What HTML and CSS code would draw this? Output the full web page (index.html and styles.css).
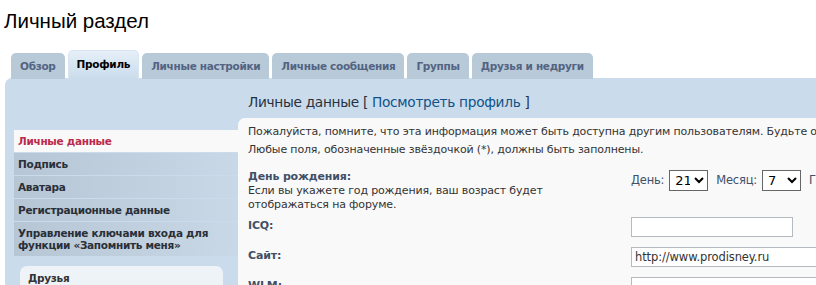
FILE: index.html
```html
<!DOCTYPE html>
<html lang="ru">
<head>
  <meta charset="UTF-8">
  <title>Личный раздел</title>
  <link rel="stylesheet" href="styles.css">
</head>
<body>
  <div class="page">
    <h1 class="page-title">Личный раздел</h1>

    <!-- Tabs -->
    <ul class="tabs">
      <li class="tab"><a href="#">Обзор</a></li>
      <li class="tab active"><a href="#">Профиль</a></li>
      <li class="tab"><a href="#">Личные настройки</a></li>
      <li class="tab"><a href="#">Личные сообщения</a></li>
      <li class="tab"><a href="#">Группы</a></li>
      <li class="tab"><a href="#">Друзья и недруги</a></li>
    </ul>

    <div class="panel">
      <div class="cp-menu">
        <ul class="nav">
          <li class="nav-item active"><a href="#">Личные данные</a></li>
          <li class="nav-item"><a href="#">Подпись</a></li>
          <li class="nav-item"><a href="#">Аватара</a></li>
          <li class="nav-item"><a href="#">Регистрационные данные</a></li>
          <li class="nav-item"><a href="#">Управление ключами входа для функции «Запомнить меня»</a></li>
        </ul>
        <div class="friends">
          <h3>Друзья</h3>
        </div>
      </div>

      <div class="cp-main">
        <h2 class="main-title">Личные данные [ <a href="#">Посмотреть профиль</a> ]</h2>
        <div class="content">
          <p class="note">Пожалуйста, помните, что эта информация может быть доступна другим пользователям. Будьте осторожны при вводе любых личных данных.<br>Любые поля, обозначенные звёздочкой (*), должны быть заполнены.</p>

          <dl class="row row-birthday">
            <dt>
              <label>День рождения:</label>
              <span class="explain">Если вы укажете год рождения, ваш возраст будет<br>отображаться на форуме.</span>
            </dt>
            <dd>
              <span class="sel-label">День:</span>
              <select class="sel"><option>21</option></select>
              <span class="sel-label">Месяц:</span>
              <select class="sel"><option>7</option></select>
              <span class="sel-label">Год:</span>
              <select class="sel sel-year"><option>1990</option></select>
            </dd>
          </dl>

          <dl class="row">
            <dt><label>ICQ:</label></dt>
            <dd><input type="text" class="inputbox short" value=""></dd>
          </dl>

          <dl class="row">
            <dt><label>Сайт:</label></dt>
            <dd><input type="text" class="inputbox" value="http://www.prodisney.ru"></dd>
          </dl>

          <dl class="row">
            <dt><label>WLM:</label></dt>
            <dd><input type="text" class="inputbox" value=""></dd>
          </dl>
        </div>
      </div>
    </div>
  </div>
</body>
</html>
```

FILE: styles.css
```css
html, body {
  overflow: hidden;
}
body {
  margin: 0;
  background: #fff;
  font-family: "DejaVu Sans", Verdana, sans-serif;
  font-size: 11px;
  letter-spacing: -0.15px;
  color: #333;
}
a {
  text-decoration: none;
}
.page {
  width: 1100px;
}
.page-title {
  margin: 0;
  padding: 8px 0 0 4px;
  height: 45px;
  box-sizing: border-box;
  font-family: "Liberation Sans", Arial, sans-serif;
  font-size: 20.5px;
  letter-spacing: 0;
  font-weight: normal;
  line-height: 26px;
  color: #000;
}

/* Tabs */
.tabs {
  list-style: none;
  margin: 0 0 -1px 0;
  padding: 0 0 0 11px;
  display: flex;
  align-items: flex-end;
  height: 34px;
}
.tab {
  margin-right: 3px;
}
.tab a {
  display: block;
  height: 26px;
  line-height: 26px;
  padding: 0 9px;
  background: #b8c9d8;
  border-radius: 5px 5px 0 0;
  font-size: 10.5px;
  letter-spacing: -0.3px;
  font-weight: bold;
  color: #536482;
}
.tab.active a {
  height: 28px;
  padding: 0 8px;
  border: 1px solid #d9e5f0;
  border-bottom: none;
  background: linear-gradient(#e5eff8, #cadceb);
  color: #000;
}

/* Panel */
.panel {
  margin-left: 5px;
  background: #cadceb;
  border-radius: 7px 0 0 0;
  display: flex;
  padding-left: 9px;
  min-height: 240px;
}
.cp-menu {
  width: 224px;
  flex: none;
  padding-top: 52px;
}
.nav {
  list-style: none;
  margin: 0;
  padding: 0;
}
.nav-item a {
  display: block;
  padding: 5px 5px 5px 4px;
  line-height: 12px;
  margin-bottom: 1px;
  font-size: 10.5px;
  letter-spacing: -0.3px;
  font-weight: bold;
  color: #2a2f38;
  background: linear-gradient(to right, #b6c6d4, #c8d8e6);
}
.nav-item.active a {
  background: #f9f9f9;
  color: #bc2a4d;
}
.friends {
  margin: 10px 15px 0 6px;
  background: #eef3f8;
  border-radius: 7px;
  padding: 6px 8px;
  height: 30px;
}
.friends h3 {
  margin: 0;
  font-size: 10.5px;
  letter-spacing: -0.3px;
  line-height: 13px;
  color: #333;
}

.cp-main {
  flex: 1;
}
.main-title {
  margin: 0;
  height: 40px;
  padding: 15px 0 0 10px;
  box-sizing: border-box;
  font-size: 13.7px;
  letter-spacing: -0.3px;
  font-weight: normal;
  line-height: 18px;
  color: #28313f;
  white-space: nowrap;
}
.main-title a {
  color: #105289;
}
.content {
  background: #f9f9f9;
  border-radius: 7px 0 0 0;
  padding: 5px 10px 10px 10px;
  min-height: 200px;
}
.note {
  margin: 0 0 11px 0;
  line-height: 18px;
  white-space: nowrap;
}

/* Form rows */
.row {
  display: flex;
  margin: 0 0 10px 0;
}
.row dt {
  width: 383px;
  flex: none;
  padding-top: 2px;
}
.row dd {
  margin: 0;
  display: flex;
  align-items: center;
  height: 20px;
  white-space: nowrap;
}
.row label {
  display: block;
  font-weight: bold;
  color: #425067;
  line-height: 14px;
}
.explain {
  display: block;
  line-height: 14px;
  color: #333;
}
.row-birthday {
  margin-bottom: 5px;
}
.row-birthday dt {
  padding-top: 0;
}
.row-birthday dd {
  height: 22px;
  align-items: flex-start;
}
.sel-label {
  font-size: 11.5px;
  line-height: 21px;
  letter-spacing: -0.2px;
  color: #425067;
  margin-right: 5px;
}
.sel {
  width: 39px;
  height: 21px;
  font-family: "DejaVu Sans", Verdana, sans-serif;
  font-size: 13px;
  color: #000;
  background: #fff;
  border: 1px solid #666;
  border-radius: 0;
  margin-right: 8px;
  padding: 0 1px;
}
.sel-year {
  width: 60px;
}
.inputbox {
  width: 400px;
  height: 20px;
  box-sizing: border-box;
  border: 1px solid #b4bac0;
  background: #fff;
  padding: 0 3px;
  font-family: "DejaVu Sans", Verdana, sans-serif;
  font-size: 11.5px;
  letter-spacing: -0.1px;
  color: #333;
}
.inputbox.short {
  width: 162px;
}
```
